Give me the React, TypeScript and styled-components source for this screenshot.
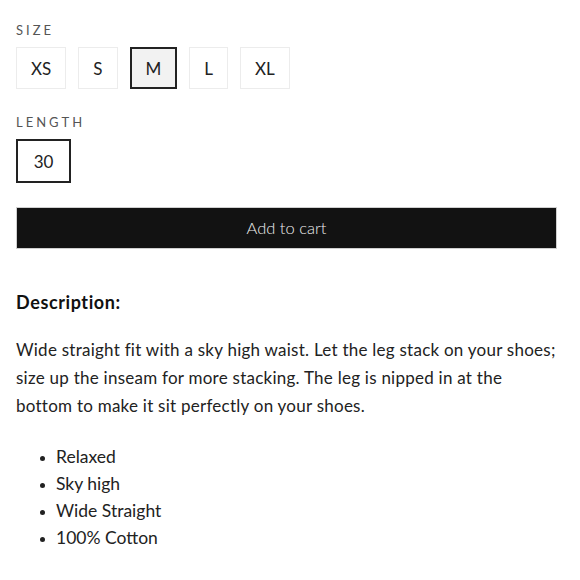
import styled, { createGlobalStyle } from 'styled-components';

const GlobalStyle = createGlobalStyle`
  body {
    margin: 0;
    background: #ffffff;
    font-family: Lato, 'Liberation Sans', sans-serif;
    color: #222222;
  }
`;

const sizes = ['XS', 'S', 'M', 'L', 'XL'];
const lengths = ['30'];
const features = ['Relaxed', 'Sky high', 'Wide Straight', '100% Cotton'];

export default function App() {
  return (
    <>
      <GlobalStyle />
      <Product>
        <OptionGroup>
          <OptionLabel>Size</OptionLabel>
          <OptionRow>
            {sizes.map((s) => (
              <OptionButton key={s} $selected={s === 'M'}>
                {s}
              </OptionButton>
            ))}
          </OptionRow>
        </OptionGroup>
        <OptionGroup>
          <OptionLabel>Length</OptionLabel>
          <OptionRow>
            {lengths.map((l) => (
              <LengthButton key={l}>{l}</LengthButton>
            ))}
          </OptionRow>
        </OptionGroup>
        <CartButton>Add to cart</CartButton>
        <Description>
          <DescriptionTitle>Description:</DescriptionTitle>
          <DescriptionText>
            Wide straight fit with a sky high waist. Let the leg stack on your shoes; size up the inseam for
            more stacking. The leg is nipped in at the bottom to make it sit perfectly on your shoes.
          </DescriptionText>
          <FeatureList>
            {features.map((f) => (
              <li key={f}>{f}</li>
            ))}
          </FeatureList>
        </Description>
      </Product>
    </>
  );
}

const Product = styled.div`
  width: 541px;
  margin-left: 16px;
  padding-top: 21px;
  display: flex;
  flex-direction: column;
`;

const OptionGroup = styled.div`
  display: flex;
  flex-direction: column;
  gap: 8px;
  margin-bottom: 24px;
`;

const OptionLabel = styled.div`
  font-size: 13px;
  line-height: 18px;
  letter-spacing: 3px;
  text-transform: uppercase;
  color: #555555;
`;

const OptionRow = styled.div`
  display: flex;
  gap: 12px;
`;

const OptionButton = styled.button<{ $selected?: boolean }>`
  height: 42px;
  padding: 0 14px;
  font-family: inherit;
  font-size: 17px;
  color: #222222;
  background: ${(p) => (p.$selected ? '#f2f2f2' : '#ffffff')};
  border: ${(p) => (p.$selected ? '2px solid #222222' : '1px solid #ececec')};
  cursor: pointer;
`;

const LengthButton = styled(OptionButton)`
  height: 44px;
  width: 55px;
  padding: 0;
  border: 2px solid #222222;
  background: #ffffff;
`;

const CartButton = styled.button`
  height: 42px;
  width: 100%;
  background: #121212;
  color: #eeeeee;
  border: 1px solid #cfcfcf;
  font-family: inherit;
  font-size: 16.5px;
  font-weight: 300;
  cursor: pointer;
`;

const Description = styled.div`
  margin-top: 41px;
  display: flex;
  flex-direction: column;
`;

const DescriptionTitle = styled.div`
  font-size: 18px;
  font-weight: 700;
  letter-spacing: 0.6px;
  line-height: 24px;
  color: #111111;
`;

const DescriptionText = styled.p`
  margin: 22px 0 0;
  font-size: 17px;
  letter-spacing: 0.25px;
  line-height: 28px;
`;

const FeatureList = styled.ul`
  margin: 23px 0 0;
  padding-left: 40px;
  font-size: 17.5px;
  line-height: 27px;

  li::marker {
    font-size: 14px;
  }
`;
